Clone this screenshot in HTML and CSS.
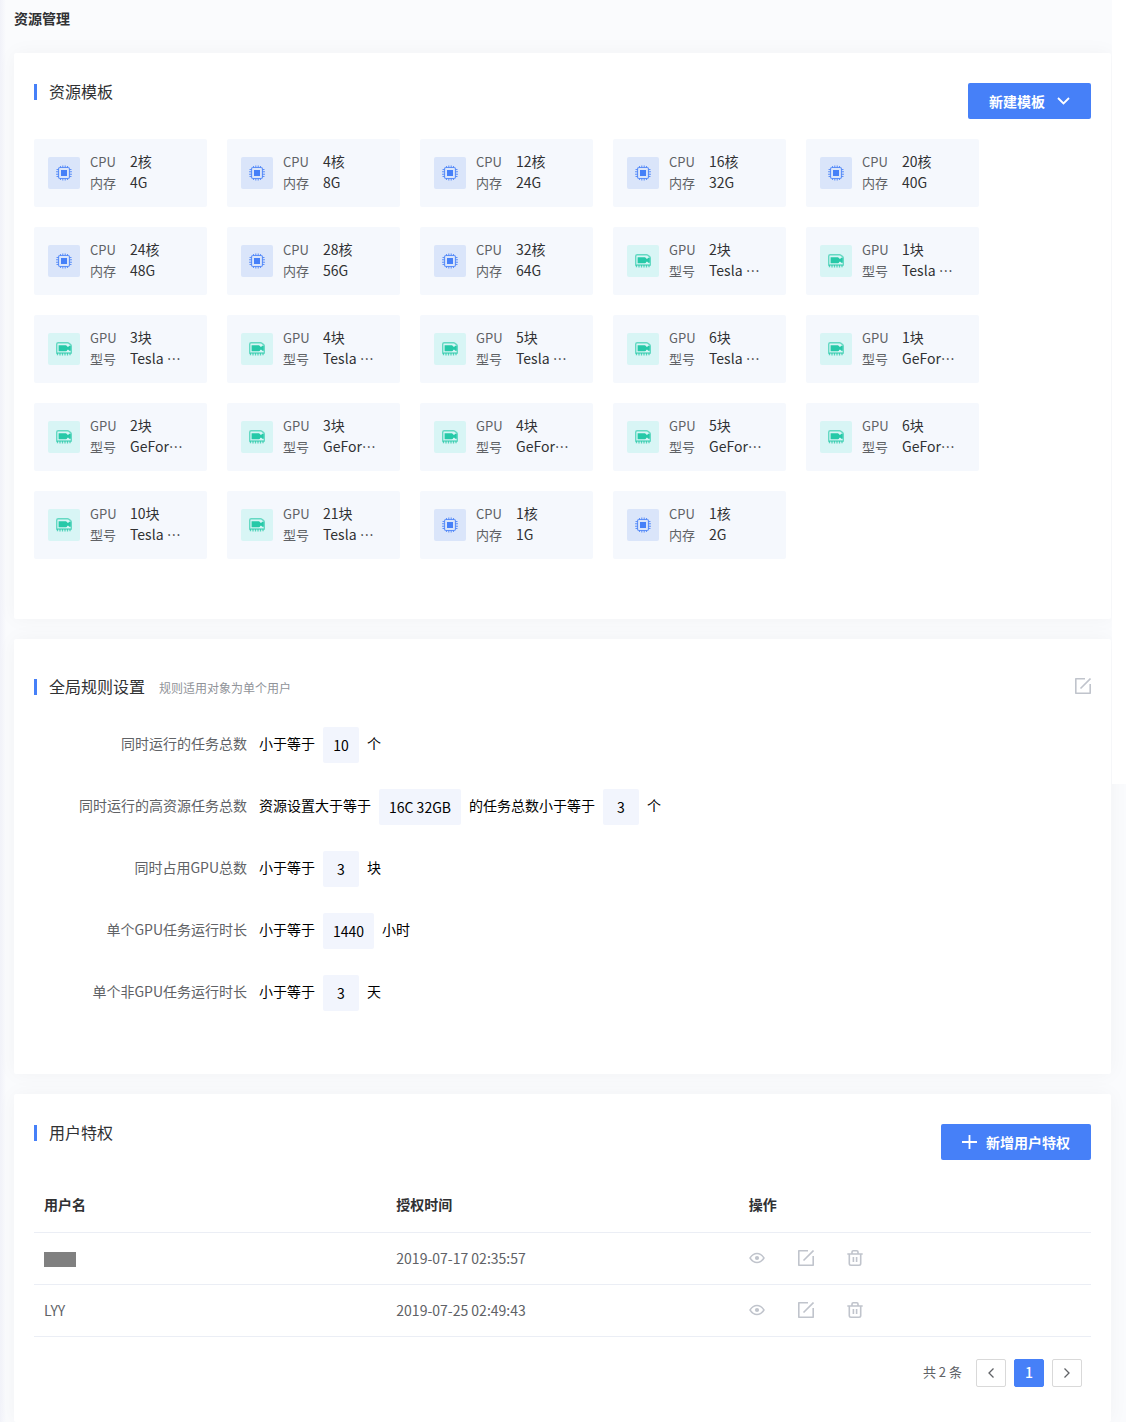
FILE: index.html
```html
<!DOCTYPE html>
<html lang="zh-CN">
<head>
<meta charset="utf-8">
<meta name="viewport" content="width=device-width, initial-scale=1">
<title>资源管理</title>
<link rel="stylesheet" href="styles.css">
</head>
<body>
<svg class="sprite" aria-hidden="true">
  <symbol id="cpu" viewBox="0 0 16 16">
    <rect x="2.5" y="2.5" width="11" height="11" rx="1.5" fill="none" stroke="currentColor" stroke-width="1.2" opacity=".8"/>
    <rect x="5" y="5" width="6" height="6" fill="currentColor"/>
    <path d="M4.5 1v1.500M6.800 .5v2M9.200 .5v2M11.500 1v1.500M4.500 13.500V15M6.800 13.500v2M9.200 13.500v2M11.500 13.500V15M.5 4.500h2M0 6.800h2.500M0 9.200h2.500M.5 11.500h2M13.500 4.500h2M13.500 6.800H16M13.500 9.200H16M13.500 11.500h2" stroke="currentColor" stroke-width="1.1" opacity=".8"/>
  </symbol>
  <symbol id="gpu" viewBox="0 0 16 16">
    <path d="M.7 12V3.200Q.7 1.700 2.200 1.700h9.300q.8 0 1.400.5l1.700 1.400q.7.600.7 1.500V12z" fill="none" stroke="currentColor" stroke-width="1.4" opacity=".65"/>
    <path d="M2.600 4.200h7.200q1 0 1.600 1.500h1l.8-1h1.600v5h-1.600l-.8-1h-1q-.6 1.500-1.600 1.500H2.600z" fill="currentColor"/>
    <path d="M1.500 12v2.200M4 12v2.600M6.500 12v2.600M9 12v2.600M11.500 12v2.600M14 12v2.200" stroke="currentColor" stroke-width="1.300" opacity=".75"/>
  </symbol>
  <symbol id="edit" viewBox="0 0 16 16">
    <path d="M10 .8H.8v14.4h14.4V6M5.500 10.500L15.500 .5" fill="none" stroke="currentColor" stroke-width="1.600" stroke-linejoin="round"/>
  </symbol>
  <symbol id="eye" viewBox="0 0 16 16">
    <path d="M1 8C3 4.900 5.300 3.500 8 3.500S13 4.900 15 8c-2 3.100-4.300 4.500-7 4.500S3 11.100 1 8z" fill="none" stroke="currentColor" stroke-width="1.400"/>
    <circle cx="8" cy="8" r="2.100" fill="currentColor"/>
  </symbol>
  <symbol id="trash" viewBox="0 0 16 16">
    <path d="M.3 4h15.400M5 4V2q0-1.200 1.200-1.200h3.600Q11 .8 11 2v2M2.300 4v9.500q0 1.700 1.700 1.700h8q1.700 0 1.700-1.700V4M6.400 7v5M9.600 7v5" fill="none" stroke="currentColor" stroke-width="1.600"/>
  </symbol>
</svg>

<h1 class="page-title">资源管理</h1>
<main class="page">
  <section class="card card-templates">
    <header class="card-head">
      <h2 class="card-title">资源模板</h2>
      <button class="btn" type="button">新建模板
        <svg class="chevron" viewBox="0 0 13 8" aria-hidden="true"><path d="M1 1l5.500 5.500L12 1" fill="none" stroke="currentColor" stroke-width="1.800"/></svg>
      </button>
    </header>
    <ul class="templates" id="templates"></ul>
  </section>

  <section class="card card-rules">
    <header class="card-head card-head-center">
      <h2 class="card-title">全局规则设置</h2>
      <span class="hint">规则适用对象为单个用户</span>
      <button class="icon-btn push" type="button" aria-label="编辑"><svg><use href="#edit"/></svg></button>
    </header>
    <dl class="rules">
      <div class="rule"><dt>同时运行的任务总数</dt><dd>小于等于<span class="value">10</span>个</dd></div>
      <div class="rule"><dt>同时运行的高资源任务总数</dt><dd>资源设置大于等于<span class="value">16C 32GB</span>的任务总数小于等于<span class="value">3</span>个</dd></div>
      <div class="rule"><dt>同时占用GPU总数</dt><dd>小于等于<span class="value">3</span>块</dd></div>
      <div class="rule"><dt>单个GPU任务运行时长</dt><dd>小于等于<span class="value">1440</span>小时</dd></div>
      <div class="rule"><dt>单个非GPU任务运行时长</dt><dd>小于等于<span class="value">3</span>天</dd></div>
    </dl>
  </section>

  <section class="card card-users">
    <header class="card-head">
      <h2 class="card-title">用户特权</h2>
      <button class="btn btn-add" type="button">
        <svg class="plus" viewBox="0 0 16 16" aria-hidden="true"><path d="M7.500 1v14M0 8h15" stroke="currentColor" stroke-width="1.800"/></svg>新增用户特权
      </button>
    </header>
    <table class="users">
      <thead><tr><th scope="col">用户名</th><th scope="col">授权时间</th><th scope="col">操作</th></tr></thead>
      <tbody>
        <tr>
          <td><span class="masked"></span></td><td>2019-07-17 02:35:57</td>
          <td><div class="actions">
            <button class="icon-btn" type="button" aria-label="查看"><svg><use href="#eye"/></svg></button>
            <button class="icon-btn" type="button" aria-label="编辑"><svg><use href="#edit"/></svg></button>
            <button class="icon-btn" type="button" aria-label="删除"><svg><use href="#trash"/></svg></button>
          </div></td>
        </tr>
        <tr>
          <td>LYY</td><td>2019-07-25 02:49:43</td>
          <td><div class="actions">
            <button class="icon-btn" type="button" aria-label="查看"><svg><use href="#eye"/></svg></button>
            <button class="icon-btn" type="button" aria-label="编辑"><svg><use href="#edit"/></svg></button>
            <button class="icon-btn" type="button" aria-label="删除"><svg><use href="#trash"/></svg></button>
          </div></td>
        </tr>
      </tbody>
    </table>
    <nav class="pager" aria-label="分页">
      <span class="total">共 2 条</span>
      <button class="page-btn" type="button" aria-label="上一页"><svg viewBox="0 0 6 10"><path d="M5.500 .5L1 5l4.500 4.500" fill="none" stroke="currentColor" stroke-width="1.300"/></svg></button>
      <button class="page-btn is-current" type="button" aria-current="page">1</button>
      <button class="page-btn" type="button" aria-label="下一页"><svg viewBox="0 0 6 10"><path d="M.5 .5L5 5 .5 9.500" fill="none" stroke="currentColor" stroke-width="1.300"/></svg></button>
    </nav>
  </section>
</main>
<script src="templates.js"></script>
</body>
</html>
```
FILE: styles.css
```css
* { box-sizing: border-box; }

body {
  position: relative;
  display: flex;
  flex-direction: column;
  min-height: 100vh;
  margin: 0;
  background: linear-gradient(90deg, #f1f2f9, #fafbfd 6px);
  color: #303133;
  font: 14px/20px "Noto Sans CJK SC", "Noto Sans", sans-serif;
}

/* White gutter beside the first screenful of content */
body::after {
  content: "";
  position: absolute;
  top: 0;
  right: 0;
  width: 14px;
  height: 784px;
  background: #fff;
}

h1, h2, ul, dl, dd { margin: 0; padding: 0; }
button { font: inherit; cursor: pointer; }
svg { display: block; }
.sprite { position: absolute; width: 0; height: 0; }

.page-title {
  padding: 8px 14px 25px;
  font-size: 14px;
  font-weight: 700;
}

.page {
  display: flex;
  flex: 1;
  flex-direction: column;
  gap: 20px;
  padding: 0 15px 0 14px;
}

.card {
  padding: 30px 20px;
  border-radius: 2px;
  background: #fff;
  box-shadow: 0 0 20px rgba(0, 0, 0, .04);
}
.card-templates { padding-bottom: 60px; }
.card-rules { padding-bottom: 63px; }
.card-users { flex: 1; }

.card-head {
  display: flex;
  align-items: flex-start;
  justify-content: space-between;
  min-height: 36px;
}
.card-head-center { align-items: center; justify-content: flex-start; }

.card-title {
  display: flex;
  align-items: flex-start;
  gap: 12px;
  min-height: 18px;
  font-size: 16px;
  font-weight: 400;
  line-height: 16px;
}
.card-title::before {
  content: "";
  width: 3px;
  height: 16px;
  margin-top: 1px;
  background: #4680f8;
}
.hint { padding: 2px 0 0 14px; color: #909399; font-size: 12px; }
.push { margin: 0 0 2px auto; }

.btn {
  display: flex;
  align-items: center;
  gap: 12px;
  height: 36px;
  padding: 0 21px;
  border: 0;
  border-radius: 2px;
  background: #4680f8;
  color: #fff;
  font-weight: 700;
}
.btn-add { gap: 8px; }
.chevron { width: 13px; height: 8px; }
.plus { width: 16px; height: 16px; }

.icon-btn {
  width: 16px;
  height: 16px;
  padding: 0;
  border: 0;
  background: none;
  color: #c0c4cc;
}
.icon-btn svg { width: 16px; height: 16px; }

.templates {
  display: flex;
  flex-wrap: wrap;
  gap: 20px;
  margin-top: 20px;
  list-style: none;
}
.template {
  display: flex;
  align-items: center;
  gap: 10px;
  width: 173px;
  padding: 13px 14px;
  border-radius: 2px;
  background: #f5f8fd;
}
.template-icon {
  display: grid;
  place-items: center;
  width: 32px;
  height: 32px;
  border-radius: 2px;
}
.template-icon svg { width: 16px; height: 16px; }
.template-icon.cpu { background: #dae5fa; color: #4680f8; }
.template-icon.gpu { background: #d8f5f5; color: #26c9a8; }
.specs {
  display: grid;
  grid-template-columns: 40px 1fr;
  grid-auto-rows: 21px;
  line-height: 19px;
}
.specs dt { color: #606266; font-size: 13px; }
.specs dd { white-space: nowrap; }

.rules { display: grid; gap: 26px; margin-top: 22px; }
.rule { display: flex; gap: 12px; line-height: 32px; }
.rule dt { width: 213px; color: #606266; text-align: right; }
.rule dd { display: flex; gap: 8px; color: #000; }
.value {
  min-width: 36px;
  padding: 2px 10px;
  border-radius: 2px;
  background: #f2f5fd;
  text-align: center;
}

.users {
  width: 100%;
  margin-top: 20px;
  border-collapse: separate;
  border-spacing: 0;
  table-layout: fixed;
}
.users th, .users td {
  height: 52px;
  padding: 0 10px 2px;
  border-bottom: 1px solid #ebeef5;
  text-align: left;
}
.users th { height: 53px; padding-bottom: 4px; }
.users td { color: #606266; }
.masked { display: block; width: 32px; height: 15px; margin-top: 4px; background: #808080; }
.actions { display: flex; gap: 33px; }

.pager {
  display: flex;
  align-items: center;
  justify-content: flex-end;
  gap: 8px;
  margin-top: 22px;
  padding-right: 9px;
  color: #606266;
}
.total { padding: 0 6px 2px 0; font-size: 13px; }
.page-btn {
  display: grid;
  place-items: center;
  width: 30px;
  height: 28px;
  padding: 0;
  border: 1px solid #d9d9d9;
  border-radius: 2px;
  background: #fff;
  color: #606266;
}
.page-btn svg { width: 6px; height: 10px; }
.page-btn.is-current {
  padding-bottom: 2px;
  border-color: #4680f8;
  background: #4680f8;
  color: #fff;
  font-weight: 500;
}
```
FILE: templates.js
```js
const templates = [
  ["cpu", "2核", "4G"], ["cpu", "4核", "8G"], ["cpu", "12核", "24G"], ["cpu", "16核", "32G"], ["cpu", "20核", "40G"],
  ["cpu", "24核", "48G"], ["cpu", "28核", "56G"], ["cpu", "32核", "64G"], ["gpu", "2块", "Tesla …"], ["gpu", "1块", "Tesla …"],
  ["gpu", "3块", "Tesla …"], ["gpu", "4块", "Tesla …"], ["gpu", "5块", "Tesla …"], ["gpu", "6块", "Tesla …"], ["gpu", "1块", "GeFor…"],
  ["gpu", "2块", "GeFor…"], ["gpu", "3块", "GeFor…"], ["gpu", "4块", "GeFor…"], ["gpu", "5块", "GeFor…"], ["gpu", "6块", "GeFor…"],
  ["gpu", "10块", "Tesla …"], ["gpu", "21块", "Tesla …"], ["cpu", "1核", "1G"], ["cpu", "1核", "2G"]
];

document.getElementById("templates").innerHTML = templates.map(([kind, count, detail]) => `
  <li class="template">
    <span class="template-icon ${kind}"><svg aria-hidden="true"><use href="#${kind}"/></svg></span>
    <dl class="specs">
      <dt>${kind.toUpperCase()}</dt><dd>${count}</dd>
      <dt>${kind === "cpu" ? "内存" : "型号"}</dt><dd>${detail}</dd>
    </dl>
  </li>`).join("");
```
